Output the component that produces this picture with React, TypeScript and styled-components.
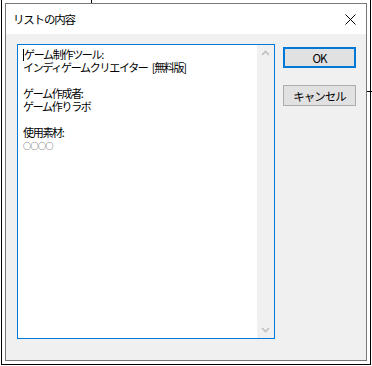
import { FC } from "react";
import styled, { createGlobalStyle } from "styled-components";

const GlobalStyle = createGlobalStyle`
  html, body {
    margin: 0;
    padding: 0;
    background: #ffffff;
  }
  * {
    box-sizing: border-box;
  }
`;

const UI_FONT = `"Noto Sans CJK JP", "Noto Sans", "Liberation Sans", sans-serif`;

const Desktop = styled.div`
  position: relative;
  width: 372px;
  height: 366px;
  overflow: hidden;
  background: #ffffff;
`;

// parts of the window that sits behind the dialog
const BackWindow = styled.div`
  position: absolute;
  left: 1px;
  top: -10px;
  width: 370px;
  height: 375px;
  border: 1px solid #000000;
`;

const EdgeStub = styled.div<{ $vertical?: boolean }>`
  position: absolute;
  background: #000000;
  ${(p) =>
    p.$vertical
      ? `left: 91px; top: 0; width: 1px; height: 4px;`
      : `left: 367px; top: 91px; width: 5px; height: 1px;`}
`;

const Dialog = styled.div`
  position: absolute;
  left: 5px;
  top: 3px;
  width: 362px;
  height: 358px;
  border: 1px solid #777777;
  background: #f0f0f0;
  display: flex;
  flex-direction: column;
  font-family: ${UI_FONT};
`;

const TitleBar = styled.div`
  height: 30px;
  background: #ffffff;
  display: flex;
  align-items: center;
  justify-content: space-between;
  padding: 0 9px 0 7px;
`;

const Title = styled.span`
  font-size: 11.5px;
  letter-spacing: -1.2px;
  color: #000000;
`;

const CloseButton = styled.button`
  width: 14px;
  height: 14px;
  border: none;
  background: none;
  padding: 0;
  display: flex;
  align-items: center;
  justify-content: center;
`;

const Body = styled.div`
  flex: 1;
  display: flex;
  align-items: flex-start;
  gap: 8px;
  padding: 10px 0 0 11px;
`;

const TextBox = styled.div`
  width: 258px;
  height: 295px;
  border: 1px solid #0078d7;
  background: #ffffff;
  display: flex;
`;

const TextArea = styled.div`
  flex: 1;
  padding: 3px 0 0 5px;
  color: #000000;
  white-space: pre;
`;

const Line = styled.div<{ $small?: boolean }>`
  height: 13px;
  line-height: 13px;
  font-size: ${(p) => (p.$small ? "8px" : "11px")};
  letter-spacing: ${(p) => (p.$small ? "-0.5px" : "-1.3px")};
  word-spacing: 3px;
  color: ${(p) => (p.$small ? "#222" : "#000")};
`;

const Caret = styled.span`
  display: inline-block;
  width: 1px;
  height: 12px;
  background: #000000;
  vertical-align: -2px;
`;

const ScrollBar = styled.div`
  width: 17px;
  background: #f0f0f0;
  display: flex;
  flex-direction: column;
  justify-content: space-between;
  align-items: center;
  padding: 5px 0 5px;
`;

const ButtonColumn = styled.div`
  display: flex;
  flex-direction: column;
  gap: 17px;
  padding-top: 3px;
`;

const DialogButton = styled.button<{ $default?: boolean }>`
  width: 73px;
  height: 21px;
  background: #e1e1e1;
  border: ${(p) => (p.$default ? "2px solid #0078d7" : "1px solid #adadad")};
  font-family: ${UI_FONT};
  font-size: 11.5px;
  letter-spacing: -1px;
  color: #000000;
  padding: 0;
  display: flex;
  align-items: center;
  justify-content: center;
`;

const Arrow: FC<{ down?: boolean }> = ({ down }) => (
  <svg width="9" height="6" viewBox="0 0 9 6">
    <path
      d={down ? "M1 1 L4.5 4.5 L8 1" : "M1 5 L4.5 1.5 L8 5"}
      fill="none"
      stroke="#c0c0c0"
      strokeWidth="1.6"
    />
  </svg>
);

const lines = [
  "ゲーム制作ツール:",
  "インディゲームクリエイター [無料版]",
  "",
  "ゲーム作成者:",
  "ゲーム作りラボ",
  "",
  "使用素材:",
  "○○○○",
];

const App: FC = () => {
  return (
    <>
      <GlobalStyle />
      <Desktop>
        <BackWindow />
        <EdgeStub $vertical />
        <EdgeStub />
        <Dialog>
          <TitleBar>
            <Title>リストの内容</Title>
            <CloseButton>
              <svg width="11" height="11" viewBox="0 0 11 11">
                <path d="M0.5 0.5 L10.5 10.5 M10.5 0.5 L0.5 10.5" stroke="#000" strokeWidth="1" />
              </svg>
            </CloseButton>
          </TitleBar>
          <Body>
            <TextBox>
              <TextArea>
                {lines.map((text, i) => (
                  <Line key={i} $small={text.startsWith("○")}>
                    {i === 0 && <Caret />}
                    {text}
                  </Line>
                ))}
              </TextArea>
              <ScrollBar>
                <Arrow />
                <Arrow down />
              </ScrollBar>
            </TextBox>
            <ButtonColumn>
              <DialogButton $default>OK</DialogButton>
              <DialogButton>キャンセル</DialogButton>
            </ButtonColumn>
          </Body>
        </Dialog>
      </Desktop>
    </>
  );
};

export default App;
